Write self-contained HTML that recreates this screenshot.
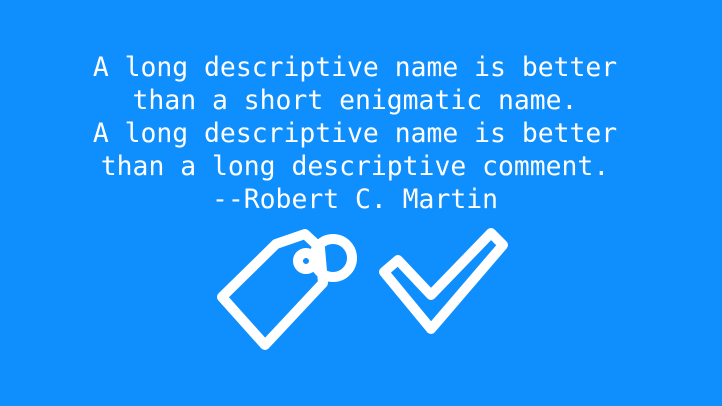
<!DOCTYPE html>
<html><head><style>
html,body{margin:0;padding:0}
body{width:722px;height:406px;background:#0f8efd;position:relative;overflow:hidden}
.q{position:absolute;left:0;top:51px;width:710px;text-align:center;color:#fff;font-family:"DejaVu Sans Mono","Liberation Mono",monospace;font-size:26.4px;line-height:33px;white-space:pre}
svg{position:absolute;left:0;top:0}
</style></head><body>
<div class="q">A long descriptive name is better
than a short enigmatic name.
A long descriptive name is better
than a long descriptive comment.
--Robert C. Martin</div>
<svg width="722" height="406" fill="none" stroke="#fff" stroke-width="10" stroke-linejoin="round" stroke-linecap="round">
<path d="M222,297 L276,244 L305,234 L320,248 L323,283 L265,345 Z"/>
<circle cx="333" cy="258" r="19"/>
<circle cx="306" cy="261" r="8"/>
<path d="M384,272 L398,260 L431,295 L491,233 L503,245 L431,329 Z"/>
</svg>
</body></html>
